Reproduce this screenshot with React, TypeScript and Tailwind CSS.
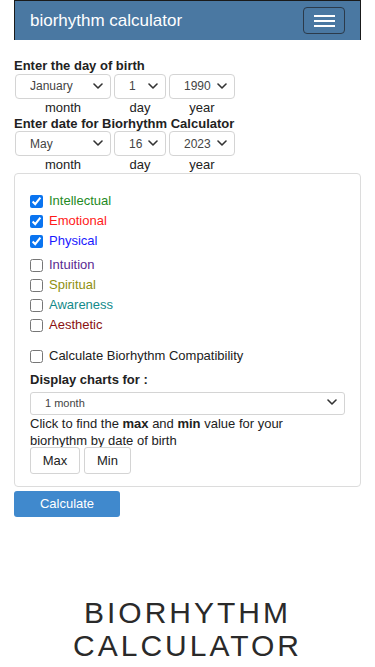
import { useState } from "react";

const months = [
  "January", "February", "March", "April", "May", "June",
  "July", "August", "September", "October", "November", "December",
];
const days = Array.from({ length: 31 }, (_, i) => String(i + 1));
const years = Array.from({ length: 131 }, (_, i) => String(1900 + i));

const cycles = [
  { name: "Intellectual", color: "text-[#1f8a1f]", checked: true },
  { name: "Emotional", color: "text-[#ff1a1a]", checked: true },
  { name: "Physical", color: "text-[#1a1aff]", checked: true },
  { name: "Intuition", color: "text-[#5a2a91]", checked: false },
  { name: "Spiritual", color: "text-[#8f8f0f]", checked: false },
  { name: "Awareness", color: "text-[#138a8a]", checked: false },
  { name: "Aesthetic", color: "text-[#8a1111]", checked: false },
];

function Chevron() {
  return (
    <svg
      viewBox="0 0 10 6"
      className="pointer-events-none absolute right-[8px] top-1/2 h-[6px] w-[10px] -translate-y-1/2"
      fill="none"
      stroke="#333"
      strokeWidth="1.6"
      strokeLinecap="round"
      strokeLinejoin="round"
    >
      <path d="M1 1l4 4 4-4" />
    </svg>
  );
}

function Select({
  value,
  options,
  width,
}: {
  value: string;
  options: string[];
  width: string;
}) {
  const [v, setV] = useState(value);
  return (
    <div className={`relative ${width}`}>
      <select
        value={v}
        onChange={(e) => setV(e.target.value)}
        className="h-[25px] w-full appearance-none rounded-[4px] border border-[#d4d4d4] bg-white pl-[14px] pr-[20px] text-[12px] text-[#444] outline-none"
      >
        {options.map((o) => (
          <option key={o}>{o}</option>
        ))}
      </select>
      <Chevron />
    </div>
  );
}

function DateRow({ m, d, y }: { m: string; d: string; y: string }) {
  return (
    <div>
      <div className="flex gap-[3px] pl-px">
        <Select value={m} options={months} width="w-[96px]" />
        <Select value={d} options={days} width="w-[52px]" />
        <Select value={y} options={years} width="w-[66px]" />
      </div>
      <div className="flex gap-[3px] pl-px text-[13px] leading-[17px] text-[#222]">
        <span className="w-[96px] text-center">month</span>
        <span className="w-[52px] text-center">day</span>
        <span className="w-[66px] text-center">year</span>
      </div>
    </div>
  );
}

export default function App() {
  return (
    <div className="min-h-[667px] bg-white px-[14px] font-['Liberation_Sans',Arial,sans-serif] text-[#222]">
      <header className="flex h-[40px] items-center justify-between border-x border-t border-[#1a1a1a] bg-[#4a78a2] pl-[15px] pr-[15px]">
        <span className="text-[17px] text-white">biorhythm calculator</span>
        <button className="flex h-[27px] w-[42px] flex-col items-center justify-center gap-[3px] rounded-[4px] border border-[#2b3a4a]">
          <span className="h-[2px] w-[21px] bg-white" />
          <span className="h-[2px] w-[21px] bg-white" />
          <span className="h-[2px] w-[21px] bg-white" />
        </button>
      </header>

      <h2 className="mt-[18px] text-[13px] font-bold leading-[15px]">Enter the day of birth</h2>
      <DateRow m="January" d="1" y="1990" />
      <h2 className="text-[13px] font-bold leading-[15px]">Enter date for Biorhythm Calculator</h2>
      <DateRow m="May" d="16" y="2023" />

      <section className="rounded-[4px] border border-[#dcdcdc] px-[15px] pb-[12px] pt-[17px]">
        <div className="flex flex-col">
          {cycles.map((c, i) => (
            <label
              key={c.name}
              className={`flex h-[20px] items-center gap-[6px] text-[13px] ${c.color} ${i === 3 ? "mt-[4px]" : ""}`}
            >
              <input
                type="checkbox"
                defaultChecked={c.checked}
                className="m-0 h-[13px] w-[13px] accent-[#0a74f0]"
              />
              {c.name}
            </label>
          ))}
        </div>

        <label className="mt-[11px] flex h-[20px] items-center gap-[6px] text-[13px] text-[#222]">
          <input type="checkbox" className="m-0 h-[13px] w-[13px]" />
          Calculate Biorhythm Compatibility
        </label>

        <h3 className="mt-[5px] text-[13px] font-bold leading-[17px]">Display charts for :</h3>
        <div className="relative mt-[2px] w-[315px]">
          <select className="h-[23px] w-full appearance-none rounded-[3px] border border-[#d4d4d4] bg-white pl-[14px] text-[11px] text-[#444] outline-none">
            <option>1 month</option>
            <option>2 months</option>
            <option>3 months</option>
          </select>
          <Chevron />
        </div>
        <p className="max-w-[285px] text-[13px] leading-[17px]">
          Click to find the <b>max</b> and <b>min</b> value for your biorhythm by date of birth
        </p>
        <div className="-mt-[2px] flex gap-[4px]">
          <button className="h-[27px] w-[50px] rounded-[3px] border border-[#d4d4d4] bg-white text-[13px]">Max</button>
          <button className="h-[27px] w-[47px] rounded-[3px] border border-[#d4d4d4] bg-white text-[13px]">Min</button>
        </div>
      </section>

      <button className="mt-[4px] h-[26px] w-[106px] rounded-[3px] bg-[#4089cd] text-[13px] text-white">
        Calculate
      </button>

      <h1 className="mt-[79px] text-center text-[30px] leading-[33px] tracking-[3px] text-[#2a2a2a]">
        BIORHYTHM
        <br />
        CALCULATOR
      </h1>
    </div>
  );
}
